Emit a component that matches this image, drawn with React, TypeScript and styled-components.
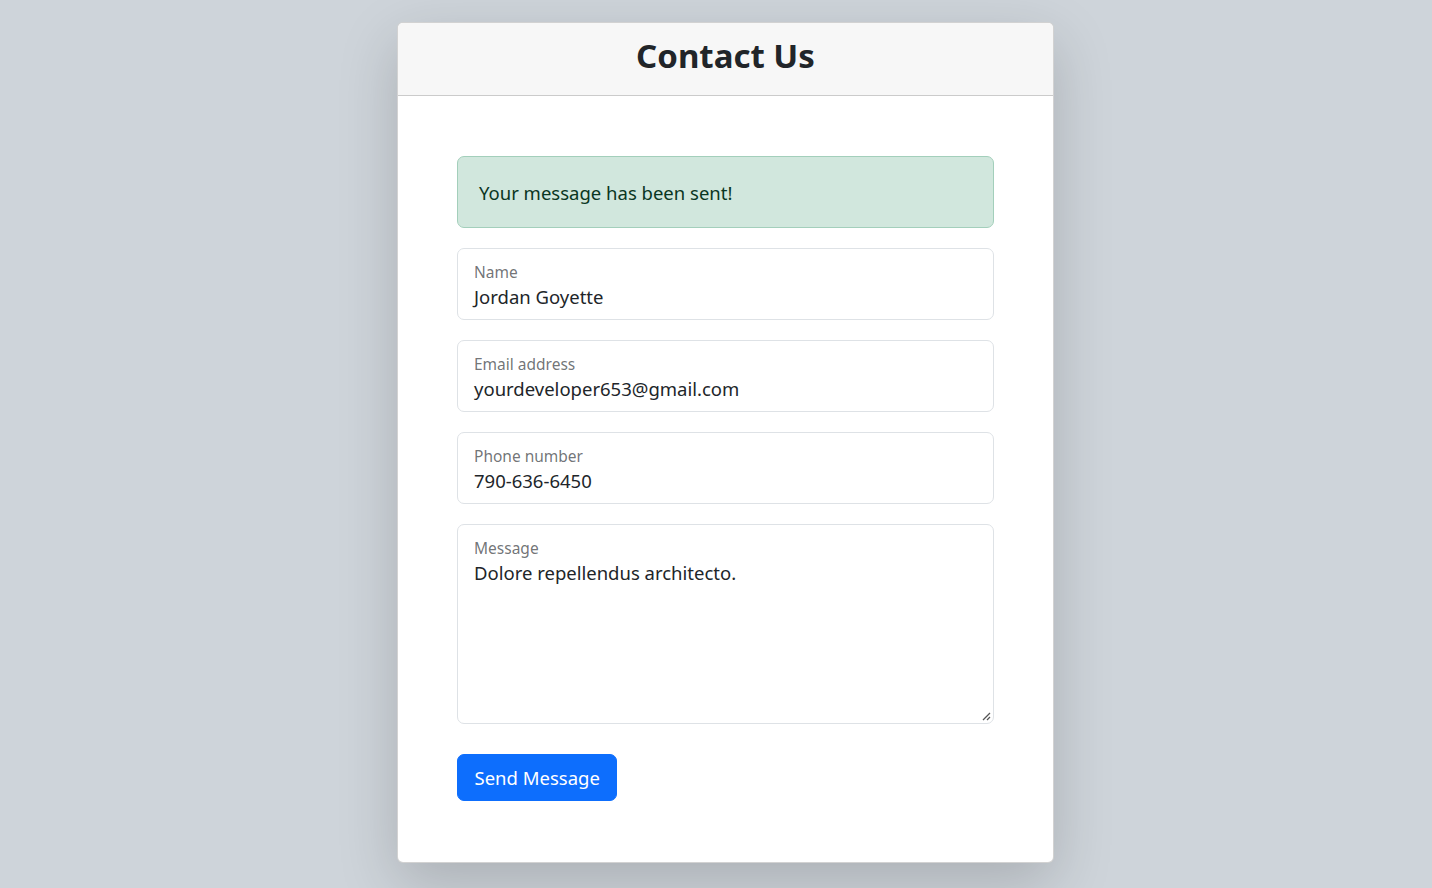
import React from 'react';
import styled, { createGlobalStyle } from 'styled-components';

const GlobalStyle = createGlobalStyle`
  html, body {
    margin: 0;
    padding: 0;
  }
  body {
    background: #ced4da;
    font-family: "Noto Sans", "Open Sans", "Liberation Sans", sans-serif;
    color: #212529;
  }
  * {
    box-sizing: border-box;
  }
`;

const Page = styled.div`
  display: flex;
  justify-content: center;
  padding: 22px 0 20px 19px;
  min-height: 888px;
`;

const Card = styled.div`
  width: 657px;
  background: #fff;
  border: 1px solid rgba(0, 0, 0, 0.175);
  border-radius: 6px;
  box-shadow: 0 20px 60px rgba(0, 0, 0, 0.175);
  display: flex;
  flex-direction: column;
  align-self: flex-start;
  overflow: hidden;
`;

const CardHeader = styled.div`
  height: 73px;
  background: #f7f7f7;
  border-bottom: 1px solid rgba(0, 0, 0, 0.175);
  display: flex;
  align-items: center;
  justify-content: center;
  padding-bottom: 6px;
`;

const Title = styled.h3`
  margin: 0;
  font-size: 33px;
  font-weight: 700;
  line-height: 1.2;
  color: #212529;
`;

const CardBody = styled.form`
  padding: 60px 59px 61px;
  display: flex;
  flex-direction: column;
`;

const Alert = styled.div`
  height: 72px;
  padding: 0 21px;
  display: flex;
  align-items: center;
  background: #d1e7dd;
  border: 1px solid #a3cfbb;
  border-radius: 7px;
  color: #0a3622;
  font-size: 18.5px;
  margin-bottom: 20px;
`;

const Field = styled.div<{ $tall?: boolean }>`
  height: ${(p) => (p.$tall ? '200px' : '72px')};
  border: 1px solid #dee2e6;
  border-radius: 7px;
  padding: 13px 16px 0;
  display: flex;
  flex-direction: column;
  margin-bottom: ${(p) => (p.$tall ? '30px' : '20px')};
  position: relative;
`;

const Label = styled.label`
  font-size: 15.5px;
  line-height: 20px;
  color: rgba(33, 37, 41, 0.65);
`;

const Value = styled.div`
  font-size: 18.5px;
  line-height: 30px;
  color: #212529;
`;

const Grip = styled.svg`
  position: absolute;
  right: 2px;
  bottom: 2px;
`;

const Button = styled.button`
  align-self: flex-start;
  height: 47px;
  padding: 0 16.5px;
  background: #0d6efd;
  border: 1px solid #0d6efd;
  border-radius: 7px;
  color: #fff;
  font-family: inherit;
  font-size: 18.5px;
  cursor: pointer;
`;

const fields = [
  { label: 'Name', value: 'Jordan Goyette' },
  { label: 'Email address', value: 'yourdeveloper653@gmail.com' },
  { label: 'Phone number', value: '790-636-6450' },
];

export default function App() {
  return (
    <>
      <GlobalStyle />
      <Page>
        <Card>
          <CardHeader>
            <Title>Contact Us</Title>
          </CardHeader>
          <CardBody onSubmit={(e) => e.preventDefault()}>
            <Alert>Your message has been sent!</Alert>
            {fields.map((f) => (
              <Field key={f.label}>
                <Label>{f.label}</Label>
                <Value>{f.value}</Value>
              </Field>
            ))}
            <Field $tall>
              <Label>Message</Label>
              <Value>Dolore repellendus architecto.</Value>
              <Grip width="10" height="10" viewBox="0 0 10 10">
                <path d="M9 2 L2 9 M9 6 L6 9" stroke="#555" strokeWidth="1.3" />
              </Grip>
            </Field>
            <Button type="submit">Send Message</Button>
          </CardBody>
        </Card>
      </Page>
    </>
  );
}
